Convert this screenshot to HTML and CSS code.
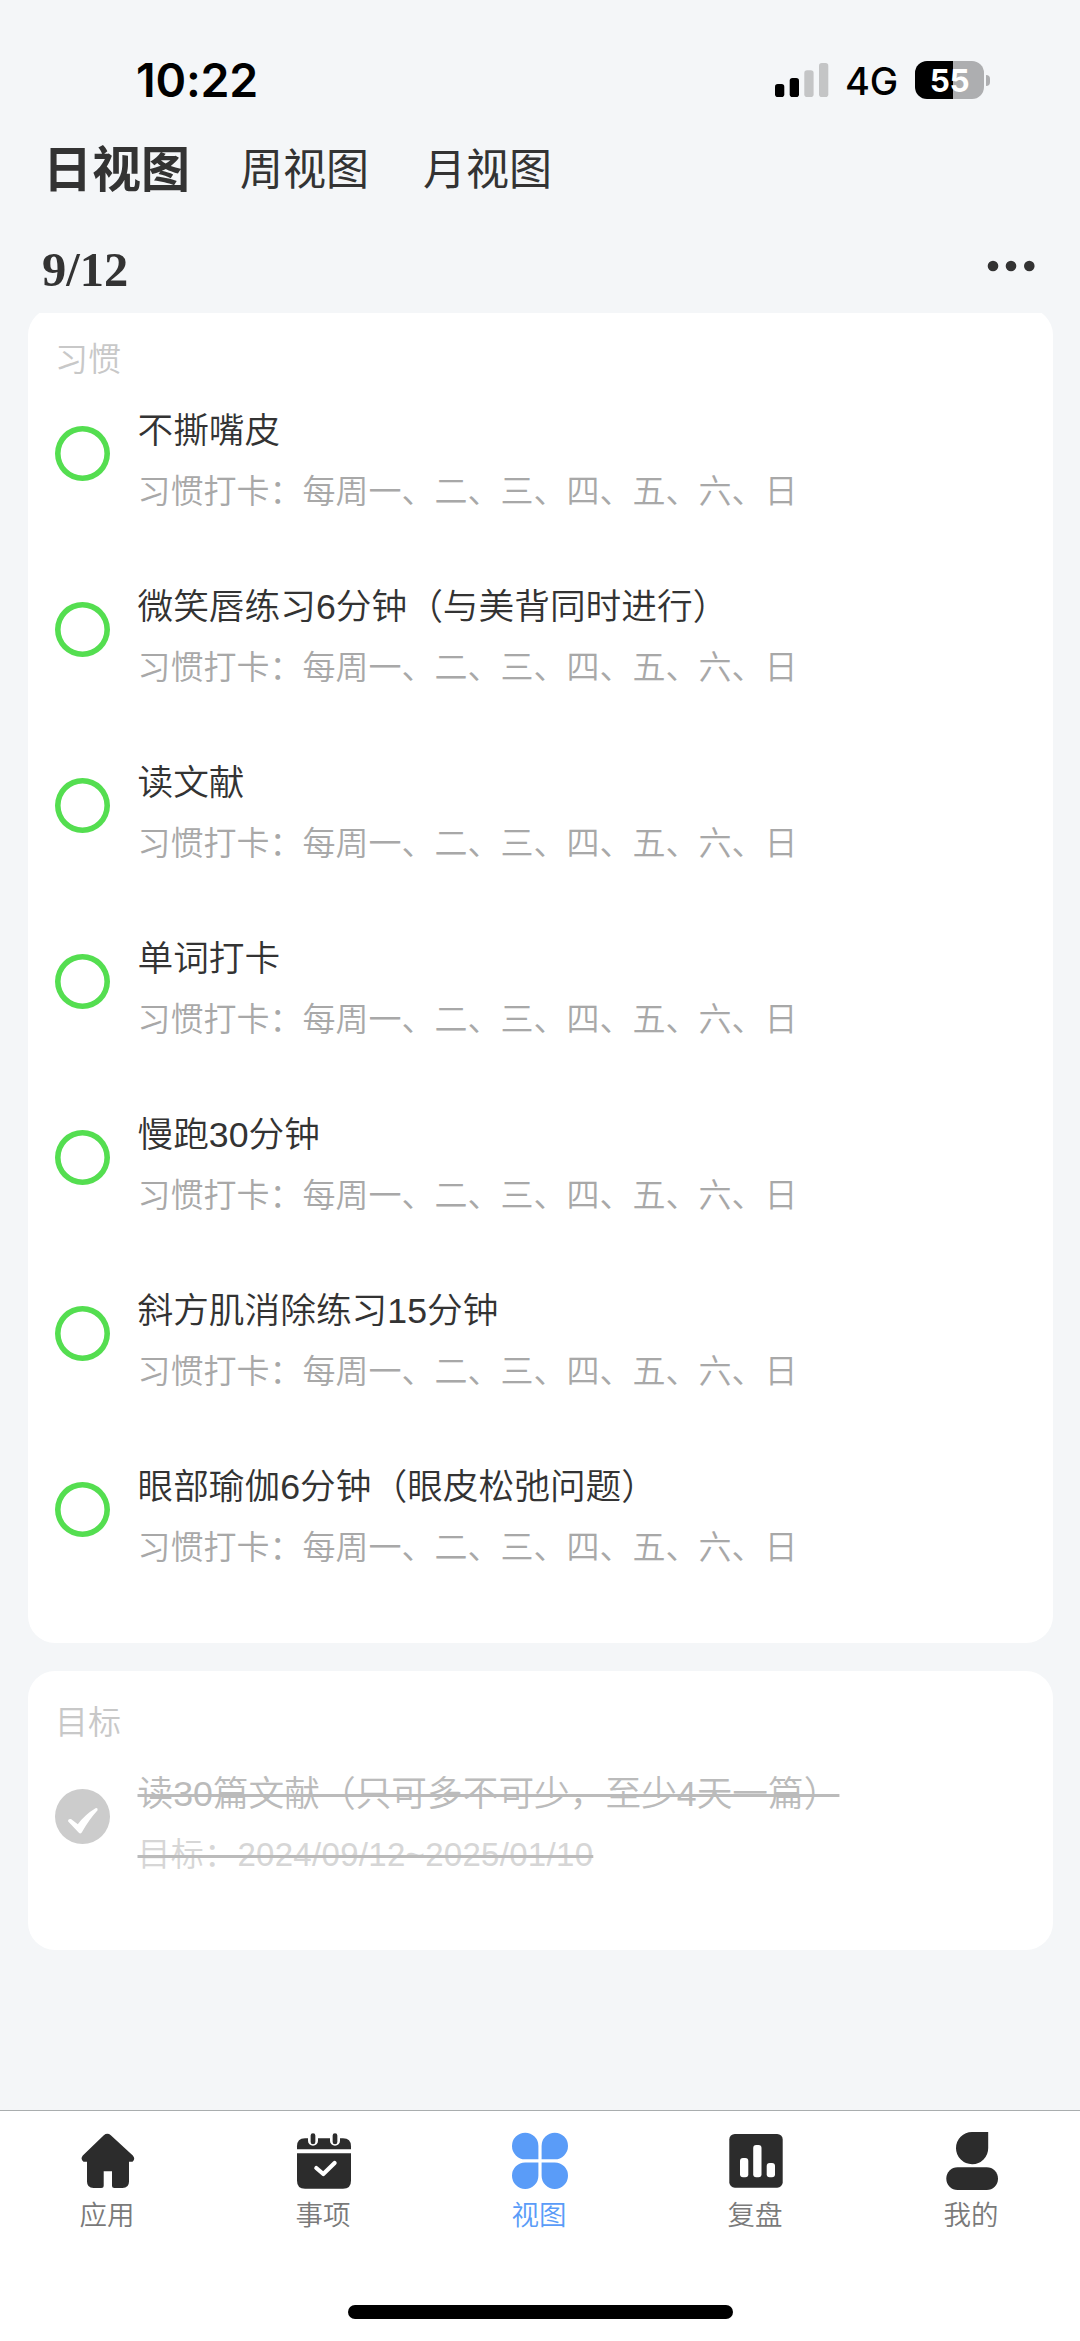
FILE: index.html
```html
<!DOCTYPE html>
<html lang="zh-CN">
<head>
<meta charset="utf-8">
<title>日视图</title>
<link rel="stylesheet" href="styles.css">
</head>
<body>
<div class="screen">
  <header class="status">
    <span class="time">10:22</span>
    <div class="status-right">
      <svg class="signal" width="54" height="34" viewBox="0 0 54 34">
        <rect x="0" y="21" width="9.3" height="13" rx="2.8"/>
        <rect x="14.7" y="15" width="9.3" height="19" rx="2.8"/>
        <rect class="dim" x="29.3" y="7.3" width="9.3" height="26.7" rx="2.8"/>
        <rect class="dim" x="44" y="0" width="9.3" height="34" rx="2.8"/>
      </svg>
      <span class="network">4G</span>
      <div class="battery"><span class="battery-text">55</span></div>
      <span class="battery-cap"></span>
    </div>
  </header>

  <nav class="tabs">
    <span class="tab active">日视图</span>
    <span class="tab">周视图</span>
    <span class="tab">月视图</span>
  </nav>

  <div class="date-row">
    <span class="date">9/12</span>
    <svg class="more" width="48" height="12" viewBox="0 0 48 12"><circle cx="6" cy="6" r="5.300"/><circle cx="24" cy="6" r="5.300"/><circle cx="42.300" cy="6" r="5.300"/></svg>
  </div>

  <main class="content">
    <section class="card">
      <h2 class="label">习惯</h2>
      <div class="item"><span class="ring"></span><div><p class="title">不撕嘴皮</p><p class="sub">习惯打卡：每周一、二、三、四、五、六、日</p></div></div>
      <div class="item"><span class="ring"></span><div><p class="title">微笑唇练习6分钟（与美背同时进行）</p><p class="sub">习惯打卡：每周一、二、三、四、五、六、日</p></div></div>
      <div class="item"><span class="ring"></span><div><p class="title">读文献</p><p class="sub">习惯打卡：每周一、二、三、四、五、六、日</p></div></div>
      <div class="item"><span class="ring"></span><div><p class="title">单词打卡</p><p class="sub">习惯打卡：每周一、二、三、四、五、六、日</p></div></div>
      <div class="item"><span class="ring"></span><div><p class="title">慢跑30分钟</p><p class="sub">习惯打卡：每周一、二、三、四、五、六、日</p></div></div>
      <div class="item"><span class="ring"></span><div><p class="title">斜方肌消除练习15分钟</p><p class="sub">习惯打卡：每周一、二、三、四、五、六、日</p></div></div>
      <div class="item"><span class="ring"></span><div><p class="title">眼部瑜伽6分钟（眼皮松弛问题）</p><p class="sub">习惯打卡：每周一、二、三、四、五、六、日</p></div></div>
    </section>
    <section class="card">
      <h2 class="label">目标</h2>
      <div class="item done">
        <svg class="check" width="55" height="55" viewBox="0 0 55 55">
          <circle cx="27.5" cy="27.5" r="27.5" fill="#ccc"/>
          <path d="M13.2 32.6Q12.6 30 15.2 30Q16.4 30 17.6 31.2L22.8 35.2Q30 25.500 40.500 19.200Q43 18.600 42.600 21.200Q34 30.500 27.200 42.800Q25.800 45.800 23.600 43.600Z" fill="#fff"/>
        </svg>
        <div><p class="title"><span>读30篇文献（只可多不可少，至少4天一篇）</span></p><p class="sub"><span>目标：2024/09/12~2025/01/10</span></p></div>
      </div>
    </section>
  </main>

  <nav class="tabbar">
    <div class="tabbar-items">
      <a class="nav">
        <svg width="60" height="60" viewBox="0 0 60 60"><path d="M25.800 5.200Q29.300 2.400 32.800 5.200L54.800 25.500Q57.800 29 54.500 31.700H51V51.500Q51 58 44.500 58H36.500Q34 58 34 55.500V41.300H25.700V55.500Q25.700 58 23.200 58H15.500Q9 58 9 51.500V31.700H5.500Q2 29 4.800 25.500Z"/></svg>
        <span>应用</span>
      </a>
      <a class="nav">
        <svg width="60" height="60" viewBox="0 0 60 60"><path d="M3 19.300V16.300Q3 8.300 11 8.300H49Q57 8.300 57 16.300V19.300Z"/><path d="M3 23.300H57V50.700Q57 58.700 49 58.700H11Q3 58.700 3 50.700Z"/><path class="halo" d="M19 5.500V10.800M41 5.500V10.800"/><path class="pin" d="M19 5.500V12M41 5.500V12"/><path class="tick" d="M22.300 38L29.300 44L40.600 33"/></svg>
        <span>事项</span>
      </a>
      <a class="nav current">
        <svg width="60" height="60" viewBox="0 0 60 60"><path d="M15.200 2.700A13.150 13.300 0 0 1 28.400 16V29.300H15.200A13.200 13.300 0 0 1 15.200 2.700ZM44.800 2.700A13.200 13.300 0 0 1 44.800 29.300H31.600V16A13.200 13.300 0 0 1 44.800 2.700ZM15.200 32.400H28.400V45.700A13.200 13.300 0 1 1 15.200 32.400ZM31.600 32.400H44.800A13.200 13.300 0 1 1 31.600 45.700Z"/></svg>
        <span>视图</span>
      </a>
      <a class="nav">
        <svg width="60" height="60" viewBox="0 0 60 60"><rect x="3.300" y="4" width="53.400" height="53.700" rx="5.500"/><g fill="#fff"><rect x="14" y="28" width="8.300" height="19.300" rx="3"/><rect x="27.200" y="15" width="8.300" height="32.300" rx="3"/><rect x="40.700" y="33" width="8.300" height="14.300" rx="3"/></g></svg>
        <span>复盘</span>
      </a>
      <a class="nav">
        <svg width="60" height="60" viewBox="0 0 60 60"><path d="M30 2H46.200V18A16.100 16.100 0 1 1 30 2Z"/><rect x="4.300" y="37.300" width="51.700" height="22.700" rx="11.300"/></svg>
        <span>我的</span>
      </a>
    </div>
    <div class="home-indicator"></div>
  </nav>
</div>
</body>
</html>
```
FILE: styles.css
```css
* { box-sizing: border-box; margin: 0; padding: 0; }

body {
  background: #f4f6f8;
  color: #333;
  font-family: "Liberation Sans", "Noto Sans CJK SC", sans-serif;
  font-weight: 350;
  text-spacing-trim: space-all;
}

.screen {
  width: 1080px;
  height: 2341px;
  display: flex;
  flex-direction: column;
  overflow: hidden;
}

/* status bar */
.status {
  height: 130px;
  padding: 50px 90px 0 136px;
  display: flex;
  justify-content: space-between;
  align-items: flex-start;
  color: #000;
  font-family: Inter, sans-serif;
}
.time { font-size: 46.500px; line-height: 61px; font-weight: 600; letter-spacing: -0.200px; }
.status-right { display: flex; align-items: center; height: 60px; }
.signal { margin-right: 16px; }
.signal .dim { fill: #c4c5c6; }
.network { width: 53px; margin-right: 17px; font-size: 38px; font-weight: 500; line-height: 60px; padding-top: 2px; letter-spacing: -0.300px; }
.battery {
  width: 69px;
  height: 38px;
  border-radius: 12px;
  background: linear-gradient(90deg, #000 38px, #adaeb0 38px);
  display: flex;
  justify-content: center;
  align-items: center;
}
.battery-text { color: #fff; font-size: 31.500px; font-weight: 700; line-height: 38px; padding-top: 1px; letter-spacing: -0.500px; }
.battery-cap { width: 4px; height: 11px; margin-left: 2px; border-radius: 0 4px 4px 0; background: #adaeb0; }

/* view switcher */
.tabs {
  height: 80px;
  padding-left: 43px;
  display: flex;
  align-items: center;
  gap: 52px;
  font-family: "Noto Sans CJK SC", sans-serif;
}
.tab { font-size: 43px; line-height: 72px; margin-top: -8px; font-weight: 400; }
.tab.active { font-size: 49px; font-weight: 700; margin-right: -2px; }
.tab:last-child { margin-left: 2px; }

.date-row {
  height: 103px;
  padding: 30px 44px 0 42px;
  display: flex;
  justify-content: space-between;
  align-items: flex-start;
}
.date { font: 700 48.500px/60px "Liberation Serif", serif; }
.more { margin: 20px 1px 0 0; width: 48px; height: 12px; fill: #333; }

/* cards */
.content {
  flex: 1;
  overflow: hidden;
  padding: 0 27px 0 28px;
}
.card { padding: 28px 27px 29px; border-radius: 27px; background: #fff; }
.card:first-child { margin-top: -5px; }
.card + .card { margin-top: 28px; }
.label { height: 46px; font-size: 33px; line-height: 48px; font-weight: 350; color: #c8c8c8; }
.item { height: 176px; display: flex; align-items: flex-start; gap: 27.500px; }
.ring, .check { width: 55px; height: 55px; margin-top: 44px; flex: none; }
.ring { box-shadow: inset 0 0 0 5.600px #54de50; border-radius: 50%; }
.title { margin-top: 27px; font-size: 35.700px; line-height: 44px; white-space: nowrap; }
.sub { margin-top: 17px; font-size: 33px; line-height: 44px; color: #a8a8a8; white-space: nowrap; }
.done .title, .done .sub { color: #bbb; }
.done span { text-decoration: line-through 2.700px #bbb; }
.done .sub span { color: #d6d6d6; letter-spacing: 0.300px; }

/* bottom bar */
.tabbar {
  height: 231px;
  border-top: 1px solid #a9adae;
  background: #fff;
  padding-top: 19px;
}
.tabbar-items { display: grid; grid-template-columns: repeat(5, 1fr); height: 175px; }
.nav {
  display: flex;
  flex-direction: column;
  align-items: center;
  fill: #2c2c2c;
  color: #7a7a7a;
  font-size: 27.500px;
  line-height: 36px;
}
.nav span { margin-top: 8px; padding-right: 2px; }
.nav.current { fill: #5a9cf8; color: #5a9cf8; }
.halo, .pin, .tick { fill: none; stroke-linecap: round; }
.halo { stroke: #fff; stroke-width: 10; }
.pin { stroke: #2c2c2c; stroke-width: 4.700; }
.tick { stroke: #fff; stroke-width: 4.200; stroke-linejoin: round; }
.home-indicator { width: 385px; height: 14px; margin: 0 auto; border-radius: 7px; background: #000; }
```
